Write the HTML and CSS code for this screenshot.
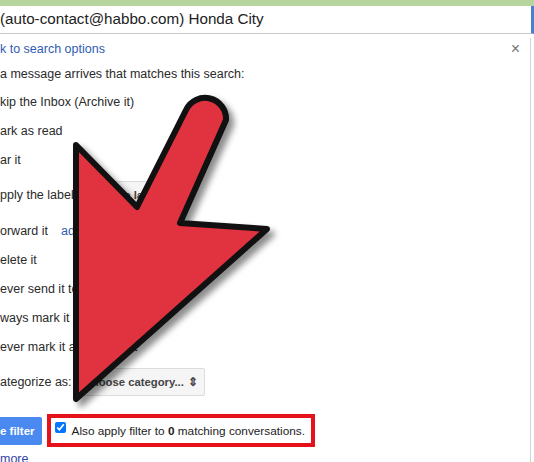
FILE: index.html
```html
<!DOCTYPE html>
<html lang="en">
<head>
    <meta charset="UTF-8">
    <meta name="viewport" content="width=device-width, initial-scale=1.0">
    <title>Create filter</title>
    <link rel="stylesheet" href="styles.css">
</head>
<body>
    <div class="page">
        <div class="topbar"></div>
        <div class="search">(auto-contact@habbo.com) Honda City</div>

        <div class="panel">
            <div class="back-row">
                <a class="link" href="#">k to search options</a>
                <span class="close">&times;</span>
            </div>

            <div class="row header">a message arrives that matches this search:</div>
            <div class="row">kip the Inbox (Archive it)</div>
            <div class="row">ark as read</div>
            <div class="row">ar it</div>
            <div class="row label-row">
                pply the label:
                <span class="select">Choose label... <span class="arrows">&#8661;</span></span>
            </div>
            <div class="row forward-row">
                orward it
                <a class="link fwd-link" href="#">add forwarding address</a>
            </div>
            <div class="row">elete it</div>
            <div class="row">ever send it to Spam</div>
            <div class="row">ways mark it as important</div>
            <div class="row">ever mark it as important</div>
            <div class="row category-row">
                ategorize as:
                <span class="select">Choose category... <span class="arrows">&#8661;</span></span>
            </div>

            <div class="actions">
                <button class="create-btn">e filter</button>
                <label class="apply-box">
                    <input type="checkbox" checked>
                    <span>Also apply filter to <b>0</b> matching conversations.</span>
                </label>
            </div>
            <a class="link more" href="#">more</a>
        </div>

        <svg class="pointer" viewBox="0 0 534 462" width="534" height="462">
            <path d="M76,399 L76,145 L137,207 L186,110 A21 21 0 0 1 226,120 L180,223 L267,229 Z"
                  fill="#e1323f" stroke="#111" stroke-width="6" stroke-linejoin="round"/>
        </svg>
    </div>
</body>
</html>
```

FILE: styles.css
```css
body {
    margin: 0;
    font-family: "Liberation Sans", Arial, sans-serif;
    background-color: #fff;
}
.page {
    position: relative;
    width: 534px;
    height: 462px;
    overflow: hidden;
    background-color: #fff;
}
.topbar {
    height: 6px;
    background-color: #b8d49e;
}
.search {
    height: 27px;
    line-height: 26px;
    font-size: 15.2px;
    color: #222;
    border-right: 3px solid #4d7fd0;
    border-bottom: 1px solid #c8c8c8;
    white-space: nowrap;
}
.panel {
    border-right: 1px solid #d4d4d4;
    margin-right: 3px;
    height: 428px;
    font-size: 12.5px;
    color: #2a2a2a;
}
.link {
    color: #2f5cb4;
    text-decoration: none;
}
.back-row {
    display: flex;
    justify-content: space-between;
    align-items: center;
    height: 22px;
    margin-top: 4px;
}
.close {
    color: #777;
    font-size: 16px;
    margin-right: 10px;
}
.row {
    display: flex;
    align-items: center;
    height: 29px;
    white-space: nowrap;
}
.header {
    height: 26px;
    margin-top: 1px;
}
.label-row {
    margin-top: 6px;
}
.forward-row {
    margin-top: 7px;
}
.fwd-link {
    margin-left: 13px;
}
.category-row {
    margin-top: 6px;
}
.select {
    display: inline-flex;
    align-items: center;
    height: 26px;
    padding: 0 6px 0 9px;
    margin-left: 2px;
    background-color: #f5f5f5;
    border: 1px solid #dcdcdc;
    border-radius: 2px;
    color: #444;
    font-weight: bold;
    font-size: 11.3px;
}
.arrows {
    margin-left: 4px;
    font-size: 12px;
}
.actions {
    display: flex;
    align-items: center;
    margin-top: 18px;
    height: 33px;
}
.create-btn {
    height: 28px;
    border: none;
    border-radius: 0 2px 2px 0;
    background-color: #4a8af0;
    color: #fff;
    font-family: inherit;
    font-weight: bold;
    font-size: 11.5px;
    white-space: nowrap;
    padding: 0 7px 0 0;
}
.apply-box {
    display: flex;
    align-items: center;
    height: 25px;
    margin-left: 5px;
    padding: 0 6px 0 4px;
    border: 4px solid #e5111b;
    font-size: 11.8px;
    color: #222;
}
.apply-box input {
    margin: 0 6px 6px 0;
    width: 11px;
    height: 11px;
}
.more {
    display: block;
    margin-top: 5px;
    color: #3344aa;
    font-size: 12.5px;
}
.pointer {
    position: absolute;
    left: 0;
    top: 0;
    filter: drop-shadow(5px 5px 3px rgba(0, 0, 0, 0.45));
}
```
